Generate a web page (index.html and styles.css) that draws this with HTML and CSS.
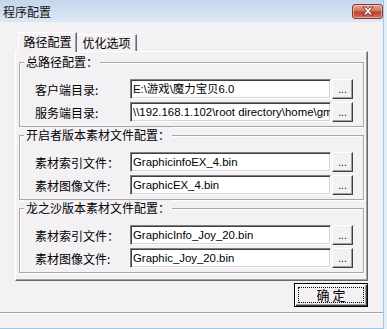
FILE: index.html
```html
<!DOCTYPE html>
<html lang="zh-CN">
<head>
<meta charset="utf-8">
<title>程序配置</title>
<link rel="stylesheet" href="styles.css">
</head>
<body>
<div class="window">
  <div class="titlebar">
    <span class="title">程序配置</span>
    <button class="close" aria-label="关闭">
      <svg width="14" height="10" viewBox="0 0 14 10">
        <path d="M2 1 L5 1 L7 3.2 L9 1 L12 1 L8.6 5 L12 9 L9 9 L7 6.8 L5 9 L2 9 L5.4 5 Z" fill="#fff" stroke="#7a2a20" stroke-width="0.9" stroke-linejoin="round"/>
      </svg>
    </button>
  </div>
  <div class="body">
    <div class="tabs">
      <div class="tab active">路径配置</div>
      <div class="tab">优化选项</div>
    </div>
    <div class="panel">
      <div class="group">
        <div class="group-title">总路径配置：</div>
        <div class="row">
          <span class="label">客户端目录:</span>
          <div class="input">E:\游戏\魔力宝贝6.0</div>
          <button class="browse">...</button>
        </div>
        <div class="row">
          <span class="label">服务端目录:</span>
          <div class="input">\\192.168.1.102\root directory\home\gm</div>
          <button class="browse">...</button>
        </div>
      </div>
      <div class="group">
        <div class="group-title">开启者版本素材文件配置：</div>
        <div class="row">
          <span class="label">素材索引文件：</span>
          <div class="input">GraphicinfoEX_4.bin</div>
          <button class="browse">...</button>
        </div>
        <div class="row">
          <span class="label">素材图像文件:</span>
          <div class="input">GraphicEX_4.bin</div>
          <button class="browse">...</button>
        </div>
      </div>
      <div class="group">
        <div class="group-title">龙之沙版本素材文件配置：</div>
        <div class="row">
          <span class="label">素材索引文件：</span>
          <div class="input">GraphicInfo_Joy_20.bin</div>
          <button class="browse">...</button>
        </div>
        <div class="row">
          <span class="label">素材图像文件:</span>
          <div class="input">Graphic_Joy_20.bin</div>
          <button class="browse">...</button>
        </div>
      </div>
    </div>
    <div class="footer">
      <button class="ok"><span class="focus">确定</span></button>
    </div>
    <div class="separator"></div>
  </div>
</div>
</body>
</html>
```

FILE: styles.css
```css
html, body {
  margin: 0;
  padding: 0;
  background: #f4f1f5;
}

.window {
  width: 383px;
  height: 328px;
  border-right: 1px solid #9cc8e8;
  border-bottom: 1px solid #9cc8e8;
  box-shadow: 3px 0 0 #e4eef7;
  background: #f4f1f5;
  font-family: "Noto Sans CJK SC", "Liberation Sans", sans-serif;
  font-size: 12px;
  color: #000;
  overflow: hidden;
}

.titlebar {
  height: 22px;
  display: flex;
  align-items: center;
  justify-content: space-between;
  padding: 0 0 0 3px;
  background: linear-gradient(#c3d6ec, #d4e2f2 60%, #dbe7f4);
}

.title {
  font-size: 12px;
  line-height: 14px;
  margin-top: 2px;
  color: #111;
}

.close {
  width: 31px;
  height: 15px;
  margin: 0;
  padding: 0;
  border: 1px solid #8a3a2e;
  border-radius: 3px;
  background: linear-gradient(#e3a99c, #d2705f 45%, #c0402f 55%, #d27564);
  display: flex;
  align-items: center;
  justify-content: center;
  box-shadow: inset 0 0 0 1px rgba(255, 220, 210, 0.5);
}

.body {
  padding: 10px 0 0 0;
}

.tabs {
  display: flex;
  align-items: flex-end;
  padding-left: 3px;
  margin-left: 15px;
  position: relative;
  z-index: 1;
}

.tab {
  box-sizing: border-box;
  width: 60px;
  height: 17px;
  border-top: 1px solid #fff;
  border-right: 1px solid #696969;
  box-shadow: inset -1px 0 0 #a0a0a0;
  text-align: center;
  line-height: 15px;
  font-size: 12px;
  background: #f4f1f5;
}

.tab.active {
  width: 59px;
  height: 20px;
  border-left: 1px solid #fff;
  margin-bottom: -1px;
  line-height: 18px;
}

.panel {
  box-sizing: border-box;
  width: 353px;
  margin-left: 15px;
  padding: 10px 3px 7px 3px;
  border-top: 1px solid #fff;
  border-left: 1px solid #fff;
  border-right: 1px solid #696969;
  border-bottom: 1px solid #696969;
  box-shadow: inset -1px -1px 0 #a0a0a0;
}

.group {
  border: 1px solid #a8a6aa;
  box-shadow: inset 1px 1px 0 #fff, 1px 1px 0 #fff;
  padding: 0 9px 4px 15px;
}

.group + .group {
  margin-top: 8px;
}

.group-title {
  width: fit-content;
  margin: -9px 0 9px -11px;
  padding: 0 2px;
  height: 16px;
  line-height: 16px;
  background: #f4f1f5;
}

.row {
  display: flex;
  align-items: center;
  height: 20px;
}

.row + .row {
  margin-top: 3px;
}

.label {
  width: 95px;
  flex: none;
  white-space: nowrap;
}

.input {
  box-sizing: border-box;
  width: 201px;
  height: 20px;
  flex: none;
  background: #fff;
  border-top: 1px solid #808080;
  border-left: 1px solid #808080;
  border-right: 1px solid #fff;
  border-bottom: 1px solid #fff;
  box-shadow: inset 1px 1px 0 #404040, inset -1px -1px 0 #d8d4dc;
  padding: 0 0 0 2px;
  line-height: 18px;
  font-family: "Liberation Sans", "Noto Sans CJK SC", sans-serif;
  font-size: 11.4px;
  white-space: nowrap;
  overflow: hidden;
}

.browse {
  box-sizing: border-box;
  width: 21px;
  height: 20px;
  margin: 0 0 0 1px;
  padding: 0 0 3px 0;
  flex: none;
  background: #f4f1f5;
  border-top: 1px solid #fff;
  border-left: 1px solid #fff;
  border-right: 1px solid #404040;
  border-bottom: 1px solid #404040;
  box-shadow: inset -1px -1px 0 #a0a0a0;
  font-family: "Liberation Sans", sans-serif;
  font-size: 10px;
  line-height: 10px;
  display: flex;
  align-items: flex-end;
  justify-content: center;
  color: #000;
}

.footer {
  display: flex;
  justify-content: flex-end;
  width: 368px;
  margin-top: 2px;
}

.ok {
  box-sizing: border-box;
  width: 74px;
  height: 24px;
  margin: 0;
  padding: 3px;
  border: 1px solid #000;
  background: #f4f1f5;
  box-shadow: inset 1px 1px 0 #fff, inset -1px -1px 0 #404040, inset -2px -2px 0 #a0a0a0;
  display: flex;
}

.focus {
  flex: 1;
  border: 1px dotted #000;
  font-family: "Noto Sans CJK SC", sans-serif;
  font-size: 13px;
  line-height: 14px;
  letter-spacing: 3px;
  padding-left: 3px;
  text-align: center;
  color: #000;
}

.separator {
  margin-top: 5px;
  height: 1px;
  background: #a3a1a5;
  box-shadow: 0 1px 0 #fff;
}
```
